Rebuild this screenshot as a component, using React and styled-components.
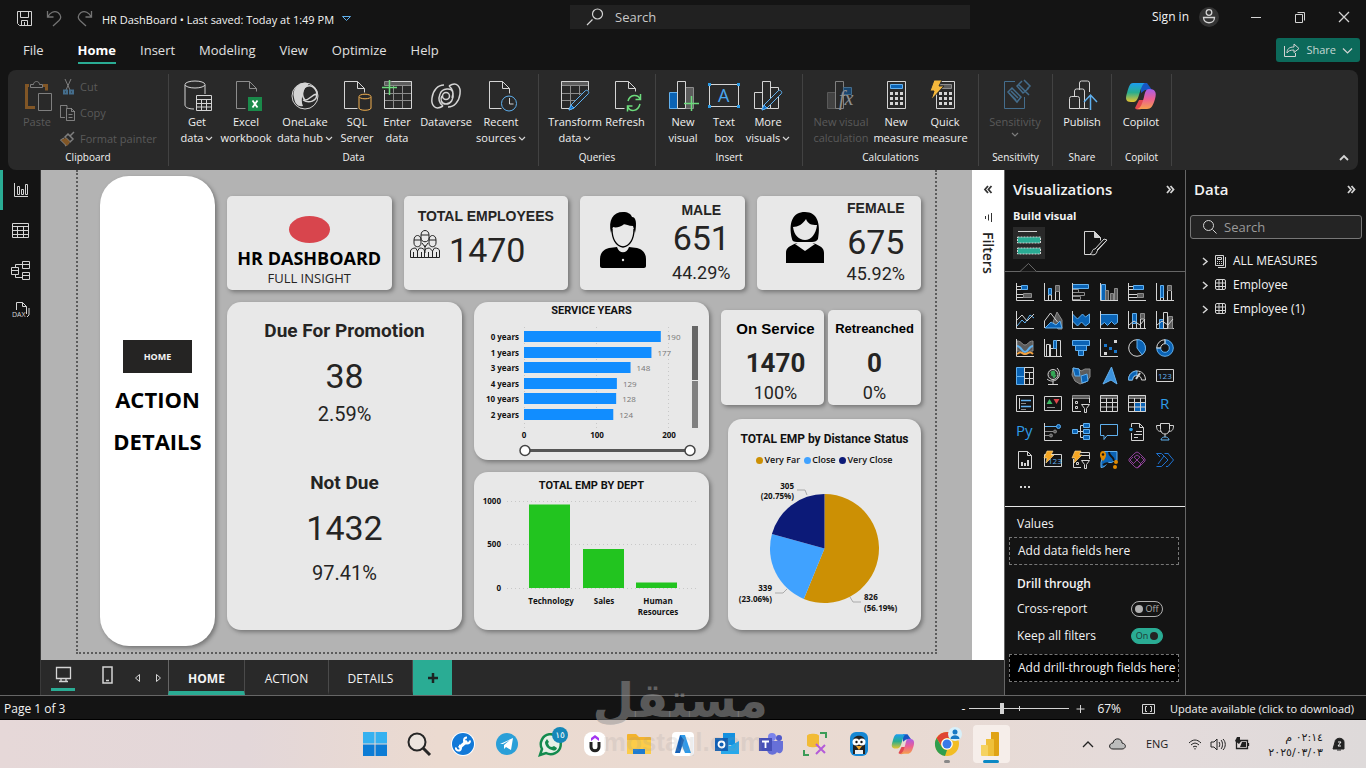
import React, { useState } from "react";
import styled, { createGlobalStyle } from "styled-components";

const GlobalStyle = createGlobalStyle`
  * {
    box-sizing: border-box;
  }
  body {
    margin: 0;
    background: #141414;
    color: #f3f3f3;
    font-family: "Open Sans", "Noto Sans", sans-serif;
    font-size: 12px;
    line-height: 16px;
  }
  button, input {
    font: inherit;
    color: inherit;
    background: none;
    border: none;
    padding: 0;
    margin: 0;
  }
`;

const Window = styled.div`
  display: flex;
  flex-direction: column;
  min-height: 100vh;
  position: relative;
`;

/* every drawing shares these stroke classes */
const Svg = styled.svg`
  display: block;
  flex: none;
  fill: none;
  stroke: #d4d4d4;
  overflow: visible;
  opacity: ${(p) => (p.$dim ? 0.5 : 1)};

  .b {
    fill: #0a63b5;
    stroke: #62b0ee;
  }
  .g {
    fill: #5c5c5c;
    stroke: #8c8c8c;
  }
  .l {
    stroke: #5fb0ee;
  }
  .q {
    stroke: #8c8c8c;
  }
  .f {
    fill: #d4d4d4;
    stroke: none;
  }
  text {
    stroke: none;
  }
`;

function Icon({ w = 16, h, dim, children }) {
  const height = h || w;
  return (
    <Svg width={w} height={height} viewBox={`0 0 ${w} ${height}`} $dim={dim} aria-hidden="true">
      {children}
    </Svg>
  );
}

function Chevron({ dim }) {
  return (
    <Icon w={8} dim={dim}>
      <path d="M1 3l3 3 3-3" strokeWidth="1.2" />
    </Icon>
  );
}

/* ---------- title bar ---------- */

const TitleBar = styled.header`
  display: flex;
  align-items: center;
  height: 34px;
`;
const TitleLeft = styled.div`
  display: flex;
  align-items: center;
  flex: 0 1 570px;
  padding: 2px 0 0 16px;
  gap: 13px;
`;
const FileName = styled.button`
  display: flex;
  align-items: center;
  gap: 8px;
  white-space: nowrap;
  margin-left: -4px;
  padding-top: 4px;
  font-size: 11px;
`;
const TitleSearch = styled.label`
  display: flex;
  align-items: center;
  gap: 11px;
  flex: 0 1 400px;
  height: 24px;
  padding: 0 16px;
  background: #212121;
  font-size: 13px;

  input {
    flex: 1;
    min-width: 0;
    outline: none;
  }
  input::placeholder {
    color: #c8c8c8;
    opacity: 1;
  }
`;
const TitleRight = styled.div`
  display: flex;
  align-items: center;
  margin-left: auto;
`;
const SignIn = styled.button`
  display: flex;
  align-items: center;
  gap: 10px;
  margin-right: 15px;
`;
const WindowButton = styled.button`
  display: flex;
  align-items: center;
  justify-content: center;
  width: 44px;
  height: 36px;
`;

function Title() {
  return (
    <TitleBar>
      <TitleLeft>
        <Icon w={17}>
          <path d="M1.500 1.500h14v14h-12l-2-2zM4.500 1.500v6h8v-6M5.500 15.500v-5h6v5M8.500 12v3" />
        </Icon>
        <Icon w={17} dim>
          <path d="M1.500 1v6h6M2 6.500C4 3 8 0 12 2.500c4 3 3 6 1 8L7 16" strokeWidth="1.3" />
        </Icon>
        <Icon w={17} dim>
          <path d="M15.500 1v6h-6M15 6.500C13 3 9 0 5 2.500c-4 3-3 6-1 8L10 16" strokeWidth="1.3" />
        </Icon>
        <FileName>
          <span>HR DashBoard • Last saved: Today at 1:49 PM</span>
          <Icon w={9} h={12}>
            <path d="M.5 2.500h8l-4 4z" className="l" />
          </Icon>
        </FileName>
      </TitleLeft>
      <TitleSearch>
        <Icon w={18}>
          <path d="M6.500 11.500L1 17M6.500 6a5 5 0 1 0 10 0a5 5 0 1 0-10 0" strokeWidth="1.2" />
        </Icon>
        <input placeholder="Search" aria-label="Search" />
      </TitleSearch>
      <TitleRight>
        <SignIn>
          Sign in
          <Icon w={20}>
            <circle cx="10" cy="10" r="10" fill="#333" stroke="none" />
            <circle cx="10" cy="5.500" r="2.800" strokeWidth="1.300" />
            <path d="M4.500 10.500h11c0 7-11 7-11 0z" strokeWidth="1.300" />
          </Icon>
        </SignIn>
        <WindowButton aria-label="Minimize">
          <Icon w={12}>
            <path d="M1 6.500h10" />
          </Icon>
        </WindowButton>
        <WindowButton aria-label="Restore">
          <Icon w={12}>
            <path d="M1.500 3.500h7v8h-7zM3.500 1.500h7v8" />
          </Icon>
        </WindowButton>
        <WindowButton aria-label="Close">
          <Icon w={12}>
            <path d="M1 1l10 10M11 1L1 11" strokeWidth="1.300" />
          </Icon>
        </WindowButton>
      </TitleRight>
    </TitleBar>
  );
}

/* ---------- menu ---------- */

const MenuBar = styled.nav`
  display: flex;
  align-items: center;
  height: 36px;
  gap: 24px;
  padding: 0 6px 4px 23px;
  font-size: 13px;
`;
const MenuItem = styled.button`
  height: 28px;
  padding-top: 2px;
  color: ${(p) => (p.$active ? "#fff" : "#e0e0e0")};
  font-weight: ${(p) => (p.$active ? 700 : 400)};
  border-bottom: 2px solid ${(p) => (p.$active ? "#2aac94" : "transparent")};

  &:first-child {
    margin-right: 10px;
  }
`;
const ShareButton = styled.button`
  display: flex;
  align-items: center;
  gap: 6px;
  height: 24px;
  padding: 0 7px;
  margin-left: auto;
  border-radius: 3px;
  background: #0c695a;
  color: #c4d8d4;
  font-size: 11px;
`;

const menu = ["File", "Home", "Insert", "Modeling", "View", "Optimize", "Help"];

function Menu() {
  return (
    <MenuBar>
      {menu.map((name) => (
        <MenuItem key={name} $active={name === "Home"}>
          {name}
        </MenuItem>
      ))}
      <ShareButton>
        <Icon w={17}>
          <path d="M1.500 4v10.500h11V11M4 11c0-4 2-6 7-6V2l5 4.500-5 4V8c-4 0-6 1-7 3z" />
        </Icon>
        Share
        <Icon w={11}>
          <path d="M1 3.500l4.500 4.500L10 3.500" strokeWidth="1.200" />
        </Icon>
      </ShareButton>
    </MenuBar>
  );
}

/* ---------- ribbon ---------- */

const RibbonBar = styled.section`
  display: flex;
  height: 100px;
  margin: 0 8px;
  background: #292929;
  border-radius: 8px;
  font-size: 11px;
`;
const Group = styled.div`
  display: flex;
  flex-direction: column;
  justify-content: space-between;
  width: ${(p) => p.$w}px;
  margin: 4px 0;
  border-right: 1px solid #424242;
`;
const GroupTools = styled.div`
  display: flex;
  padding-left: ${(p) => p.$pad}px;
`;
const GroupName = styled.div`
  text-align: center;
  font-size: 10px;
  line-height: 14px;
  margin-bottom: 2px;
`;
const Tool = styled.button`
  display: flex;
  flex-direction: column;
  align-items: center;
  width: ${(p) => p.$w}px;
  padding-top: 6px;
  gap: 2px;
  white-space: nowrap;
  color: ${(p) => (p.disabled ? "#5a5a5a" : "#f0f0f0")};
`;
const ToolLine = styled.span`
  display: flex;
  align-items: center;
  justify-content: center;
  gap: 2px;
`;
const ClipList = styled.div`
  display: flex;
  flex-direction: column;
  gap: 3px;
  padding-top: 1px;
`;
const ClipButton = styled.button`
  display: flex;
  align-items: center;
  gap: 4px;
  height: 23px;
  color: #5a5a5a;
`;
const Collapse = styled.button`
  align-self: flex-end;
  margin: 0 8px 6px auto;
`;

const sheet = <path d="M6.500 1.500h13l7 7M6.500 1.500v27h9M19.500 1.500v7h7v3" />;
const pencil = (
  <g className="l">
    <path d="M26 11c1-1 2-1 3 0s1 2 0 3L15 28l-5 2 2-5z" fill="#292929" />
    <path d="M10 30l2-5 3 3z" fill="#0a6cc8" />
  </g>
);

const art = {
  paste: (
    <>
      <path d="M8 5.500H5.500v22H14M22 5.500h3.500v5" stroke="#d98324" strokeWidth="3" />
      <path d="M9.500 7.500h12v-3h-3c0-4-6-4-6 0h-3zM17.500 13.500h13v17h-13z" fill="#292929" />
    </>
  ),
  get: (
    <>
      <ellipse cx="14" cy="4.500" rx="10" ry="3.500" />
      <path d="M4 5v20c0 2 3 4 9 4M24 5v9M15.500 15.500h15v15h-15zM15.500 19.500h15M15.500 23.500h15M15.500 27h15M20.500 19v11M25.500 19v11" />
    </>
  ),
  excel: (
    <>
      <g className="q">{sheet}</g>
      <path d="M18 17h14v14H18z" fill="#1a8a4a" stroke="none" />
      <path d="M22.500 20.500l5 7M27.500 20.500l-5 7" stroke="#fff" strokeWidth="1.800" />
    </>
  ),
  lake: (
    <>
      <circle cx="16" cy="16" r="13" />
      <path d="M5 18C2 8 12 0 20 3.500 14 8 11 20 14 26 9 27 6 24 5 18z" className="f" />
      <path d="M19 4c-6 4-7 12-3 16 5 0 7-6 12-6M15 8c6-5 12-1 13 6 0 7-8 10-14 6" strokeWidth="1.500" />
    </>
  ),
  sql: (
    <>
      <path d="M3.500 1.500h13l7 7M3.500 1.500v27h13M16.500 1.500v7h7v4" />
      <g stroke="#f2b050" fill="#292929">
        <path d="M18 17v11c0 3 12 3 12 0V17" />
        <ellipse cx="24" cy="16.500" rx="6" ry="2.300" />
      </g>
    </>
  ),
  enter: (
    <>
      <path d="M3.500 1.500h27v4h-27z" className="g" />
      <path d="M3.500 13.500h27M3.500 20.500h27M12.500 6v22M21.500 6v22" className="q" />
      <path d="M3.500 10v18.500h27v-27h-20" />
      <path d="M8.500 0v15M1 7.500h15" stroke="#6cdb7c" strokeWidth="1.500" />
    </>
  ),
  dataverse: (
    <g strokeWidth="1.500">
      <path d="M13 26C5 31 1 25 2 18 3 10 8 5 14 5M19 6c8-5 12 1 11 8-1 8-6 13-12 13" />
      <path d="M13 26c-4-3-5-7-3-12 2-6 12-7 13-1s-2 11-7 11c-5 0-6-5-4-8M19 6c4 3 5 7 3 12" />
      <circle cx="16" cy="16" r="3.500" />
    </g>
  ),
  recent: (
    <>
      <path d="M4.500 1.500h13l7 7M4.500 1.500v27h12M17.500 1.500v7h7v5" />
      <circle cx="24" cy="23.500" r="7.500" className="l" fill="#292929" />
      <path d="M24.500 18v6h4" />
    </>
  ),
  transform: (
    <>
      <path d="M2.500 1.500h27v4h-27z" className="g" />
      <path d="M2.500 13.500h20M2.500 20.500H16M11.500 6v22M20.500 6v9" className="q" />
      <path d="M12 28.500H2.500v-27h27v9" />
      {pencil}
    </>
  ),
  refresh: (
    <>
      {sheet}
      <path d="M19 21c2-7 10-7 12-2M31.500 14v5.500h-5M31 24c-2 8-10 8-12 3M18.500 31.500V26h5" stroke="#6cdb7c" strokeWidth="1.500" />
    </>
  ),
  visual: (
    <>
      <path d="M18.500 7.500h8v21h-8z" className="g" />
      <path d="M2.500 12.500h8v16h-8z" className="b" />
      <path d="M10.500 1.500h8v27h-8z" fill="#292929" />
      <path d="M24.500 16v15M17 23.500h15" stroke="#6cdb7c" strokeWidth="1.500" />
    </>
  ),
  textbox: (
    <>
      <path d="M1.500 4.500h29v22h-29z" />
      <path d="M0 3h3v3H0zM29 3h3v3h-3zM0 25h3v3H0zM29 25h3v3h-3z" fill="#2b9be6" stroke="none" />
      <text x="10" y="22" fontSize="18" fill="#4aa8ee">A</text>
    </>
  ),
  more: (
    <>
      <path d="M2.500 12.500h8v16h-8zM10.500 1.500h8v27h-8zM18.500 7.500h8v21h-8z" />
      {pencil}
    </>
  ),
  calc: (
    <>
      <path d="M2.500 12.500h8v16h-8z" className="g" />
      <path d="M10.500 1.500h8v27h-8z" />
      <path d="M18.500 7.500h8v7h-8z" className="b" />
      <text x="14" y="25" fontSize="20" fontStyle="italic" fontFamily="Liberation Serif, serif" fill="#f4f4f4">fx</text>
    </>
  ),
  measure: (
    <>
      <path d="M7.500 1.500h18v27h-18z" />
      <path d="M10.500 4.500h12v4h-12z" className="b" />
      <path d="M10 12h3v3h-3zM15 12h3v3h-3zM20 12h3v3h-3zM10 17h3v3h-3zM15 17h3v3h-3zM20 17h3v3h-3zM10 22h3v3h-3zM15 22h3v3h-3zM20 22h3v3h-3z" className="f" />
    </>
  ),
  quick: (
    <>
      <path d="M7.500 1.500h18v27h-18z" />
      <path d="M10.500 4.500h12v4h-12z" className="g" />
      <path d="M10 12h3v3h-3zM15 12h3v3h-3zM20 12h3v3h-3zM10 17h3v3h-3zM15 17h3v3h-3zM20 17h3v3h-3zM10 22h3v3h-3zM15 22h3v3h-3zM20 22h3v3h-3z" className="f" />
      <path d="M5 0h8l-3 6h5L2 20l3-9H1z" fill="#f5b83c" stroke="#292929" />
    </>
  ),
  sensitivity: (
    <g className="l">
      <path d="M16 1.500H5.500v27h20V17" />
      <path d="M9 12l4-4 9 9-4 5zM12 11l7 7M10 13l7 7M19 4l5 5 6 6M23 1l-5 5 6 7 6-5M25 0l6 6-3 3" strokeWidth="1.500" />
    </g>
  ),
  publish: (
    <>
      <path d="M13.500 10v-7q0-2 2-2h6q2 0 2 2v9M8.500 16v-5q0-2 2-2h6q2 0 2 2v18M3.500 18.500q0-2 2-2h6q2 0 2 2v10h-10zM13.500 28.500h9" />
      <path d="M24.500 30V16M18 22l6.500-7 6.500 7" className="l" strokeWidth="1.500" />
    </>
  ),
};

function CopilotMark({ size }) {
  return (
    <Svg width={size} height={size} viewBox="0 0 32 32" aria-hidden="true">
      <defs>
        <linearGradient id="copA" x1="0" y1="0" x2="0" y2="1">
          <stop offset="0" stopColor="#1b9df0" />
          <stop offset=".5" stopColor="#29ad8e" />
          <stop offset="1" stopColor="#e8c42e" />
        </linearGradient>
        <linearGradient id="copB" x1="0" y1="0" x2="0" y2="1">
          <stop offset="0" stopColor="#a85de8" />
          <stop offset=".5" stopColor="#ec5f92" />
          <stop offset="1" stopColor="#f5a04c" />
        </linearGradient>
      </defs>
      <g stroke="none">
        <path d="M16 3h6l5 7h-7l-4 3z" fill="#1656c4" />
        <path d="M10 28l4-8h7l-4 8c-1 2-6 2-7 0z" fill="#e2484f" />
        <path d="M8 3h12c-3 1-4 6-6 12-2 7-4 7-8 7-5 0-6-3-4-9C4 6 5 3 8 3z" fill="url(#copA)" />
        <path d="M24 9c6 0 8 3 6 10-2 7-4 10-8 10H12c4-1 5-5 7-12 1-5 2-8 5-8z" fill="url(#copB)" />
      </g>
    </Svg>
  );
}

const groups = [
  {
    name: "Data",
    w: 370,
    pad: 4,
    tools: [
      [48, "get", "Get", "data", true],
      [50, "excel", "Excel", "workbook"],
      [68, "lake", "OneLake", "data hub", true],
      [36, "sql", "SQL", "Server"],
      [44, "enter", "Enter", "data"],
      [54, "dataverse", "Dataverse"],
      [56, "recent", "Recent", "sources", true],
    ],
  },
  { name: "Queries", w: 117, pad: 8, tools: [[56, "transform", "Transform", "data", true], [44, "refresh", "Refresh"]] },
  {
    name: "Insert",
    w: 147,
    pad: 6,
    tools: [
      [42, "visual", "New", "visual"],
      [40, "textbox", "Text", "box"],
      [48, "more", "More", "visuals", true],
    ],
  },
  {
    name: "Calculations",
    w: 176,
    pad: 8,
    tools: [
      [60, "calc", "New visual", "calculation", false, true],
      [50, "measure", "New", "measure"],
      [48, "quick", "Quick", "measure"],
    ],
  },
  { name: "Sensitivity", w: 74, pad: 6, tools: [[60, "sensitivity", "Sensitivity", "", true, true]] },
  { name: "Share", w: 59, pad: 4, tools: [[50, "publish", "Publish"]] },
  { name: "Copilot", w: 60, pad: 4, tools: [[50, "copilot", "Copilot"]] },
];

function Ribbon() {
  return (
    <RibbonBar>
      <Group $w={161}>
        <GroupTools $pad={6}>
          <Tool $w={46} disabled>
            <Icon w={32} dim>{art.paste}</Icon>
            Paste
          </Tool>
          <ClipList>
            <ClipButton disabled>
              <Icon dim>
                <path d="M5 0l5 11M11 0L6 11" />
                <path d="M4 11.500h3v3H4zM10 11.500h3v3h-3z" className="l" strokeWidth="2" />
              </Icon>
              Cut
            </ClipButton>
            <ClipButton disabled>
              <Icon dim>
                <path d="M5 12.500H.5v-12H7V3M6.500 3.500h5l3 3v9h-8zM11.500 3.500v3h3M8.500 9.500h4M8.500 12.500h4" />
              </Icon>
              Copy
            </ClipButton>
            <ClipButton disabled>
              <Icon dim>
                <path d="M14 1l-4 4M8 3l5 5-3 3-5-5zM4 7L1 9l5 5M5 15l4-3" strokeWidth="1.500" />
                <path d="M1 9l5-2 4 4-3 4z" fill="#d98324" stroke="none" />
              </Icon>
              Format painter
            </ClipButton>
          </ClipList>
        </GroupTools>
        <GroupName>Clipboard</GroupName>
      </Group>
      {groups.map((group) => (
        <Group key={group.name} $w={group.w}>
          <GroupTools $pad={group.pad}>
            {group.tools.map(([w, icon, first, second, drop, off]) => (
              <Tool key={icon} $w={w} disabled={off}>
                {icon === "copilot" ? <CopilotMark size={32} /> : <Icon w={32} dim={off}>{art[icon]}</Icon>}
                <span>
                  <ToolLine>{first}</ToolLine>
                  <ToolLine>
                    {second}
                    {drop && <Chevron dim={off} />}
                  </ToolLine>
                </span>
              </Tool>
            ))}
          </GroupTools>
          <GroupName>{group.name}</GroupName>
        </Group>
      ))}
      <Collapse aria-label="Collapse the ribbon">
        <Icon w={12}>
          <path d="M2 8l4-4 4 4" strokeWidth="1.800" />
        </Icon>
      </Collapse>
    </RibbonBar>
  );
}

/* ---------- workspace ---------- */

const Workspace = styled.main`
  display: flex;
  flex: 1;
  border-bottom: 1px solid #666;
`;
const Rail = styled.nav`
  display: flex;
  flex-direction: column;
  width: 41px;
  border-right: 1px solid #3a3a3a;
`;
const RailButton = styled.button`
  display: flex;
  align-items: center;
  justify-content: center;
  height: 40px;
  padding-right: 2px;
  border-left: 3px solid ${(p) => (p.$active ? "#2aac94" : "transparent")};
`;
const Center = styled.div`
  display: flex;
  flex-direction: column;
  flex: 1;
  min-width: 0;
`;
const CanvasRow = styled.div`
  display: flex;
  flex: 1;
`;
const Canvas = styled.div`
  display: flex;
  flex: 1;
  padding: 0 35px 6px;
  background: #b3b3b3;
`;
const Page = styled.div`
  display: flex;
  flex: 1;
  gap: 12px;
  padding: 6px 14px 6px 22px;
  border: 2px dotted #5c5c5c;
  border-top: none;
`;
const SideNav = styled.nav`
  display: flex;
  flex-direction: column;
  align-items: center;
  justify-content: center;
  gap: 10px;
  width: 115px;
  padding-bottom: 25px;
  background: #fff;
  border-radius: 29px;
  box-shadow: 2px 2px 4px rgba(0, 0, 0, 0.35);
`;
const HomeButton = styled.button`
  width: 69px;
  height: 33px;
  background: #252423;
  font-size: 9px;
  font-weight: 700;
`;
const SideLink = styled.a`
  color: #000;
  font-size: 22px;
  font-weight: 700;
  line-height: 32px;
  text-decoration: none;
`;
const Report = styled.div`
  display: flex;
  flex-direction: column;
  flex: 1;
  gap: 12px;
  padding: 20px 0 16px;
  color: #252423;
  font-family: Roboto, sans-serif;
`;
const KpiRow = styled.div`
  display: grid;
  grid-template-columns: repeat(4, 1fr);
  gap: 12px;
  height: 94px;
`;
const DetailRow = styled.div`
  display: grid;
  grid-template-columns: 235fr 235fr 200fr;
  gap: 12px;
  flex: 1;
`;
const Stack = styled.div`
  display: flex;
  flex-direction: column;
  gap: ${(p) => p.$gap}px;
  padding-top: ${(p) => p.$top || 0}px;
`;
const Card = styled.section`
  display: flex;
  flex-direction: ${(p) => (p.$row ? "row" : "column")};
  align-items: center;
  flex: 1;
  min-width: 0;
  padding-top: ${(p) => p.$top || 0}px;
  background: #e8e8e8;
  border-radius: ${(p) => (p.$round ? 14 : 5)}px;
  box-shadow: 2px 2px 4px rgba(0, 0, 0, 0.35);
`;
const PieCard = styled(Card)`
  margin-left: 7px;
`;
const Logo = styled.div`
  width: 41px;
  height: 27px;
  margin-top: 20px;
  border-radius: 50%;
  background: #d8454d;
`;
const Brand = styled.h1`
  margin: 4px 0 0;
  color: #000;
  font-family: "Open Sans", sans-serif;
  font-size: 18px;
  line-height: 22px;
  white-space: nowrap;
`;
const Tagline = styled.div`
  font-family: "Open Sans", sans-serif;
  font-size: 13px;
  line-height: 18px;
`;
const Caption = styled.h2`
  margin: 0;
  font-family: "Liberation Sans", sans-serif;
  font-size: ${(p) => p.$size || 14}px;
  line-height: 20px;
  white-space: nowrap;
`;
const Heading = styled.h2`
  margin: 0 0 9px;
  font-size: 19px;
  line-height: 28px;
`;
const Big = styled.div`
  font-size: ${(p) => (p.$bold ? 26 : 34)}px;
  font-weight: ${(p) => (p.$bold ? 700 : 400)};
  line-height: 36px;
`;
const Percent = styled.div`
  font-size: ${(p) => (p.$large ? 20 : 18)}px;
  line-height: ${(p) => (p.$large ? 32 : 28)}px;
`;
const Due = styled.div`
  padding-top: 15px;
  margin-bottom: 24px;
  text-align: center;

  ${Big} {
    margin-bottom: ${(p) => p.$below || 0}px;
    line-height: 44px;
  }
`;
const Figures = styled.div`
  display: flex;
  flex-direction: column;
  align-items: center;
  margin-left: auto;
  padding-right: ${(p) => p.$right}px;

  ${Big} {
    margin: ${(p) => p.$above || 0}px 0 ${(p) => p.$below || 0}px;
  }
`;
const TotalLine = styled.div`
  display: flex;
  align-items: center;
  gap: 9px;
  height: 48px;
  margin-right: 36px;

  svg {
    margin-bottom: 12px;
  }
`;
const ChartTitle = styled.h2`
  margin: ${(p) => p.$top}px 0 0;
  color: #111;
  font-size: ${(p) => (p.$wide ? 12 : 11)}px;
  line-height: 16px;
  white-space: nowrap;
`;
const ChartSvg = styled.svg`
  display: block;
  flex: none;
  font-family: "Open Sans", sans-serif;
  font-size: 8px;
  font-weight: 700;
  fill: #111;
`;
const Legend = styled.div`
  display: flex;
  gap: 4px;
  margin-top: 5px;
  color: #111;
  font-family: "Open Sans", sans-serif;
  font-size: 9px;
  font-weight: 600;
  white-space: nowrap;
`;
const LegendItem = styled.span`
  display: flex;
  align-items: center;
  gap: 1px;

  &::before {
    content: "";
    width: 7px;
    height: 7px;
    border-radius: 50%;
    background: ${(p) => p.$color};
  }
`;

const service = [
  ["0 years", 190],
  ["1 years", 177],
  ["3 years", 148],
  ["4 years", 129],
  ["10 years", 128],
  ["2 years", 124],
];

function ServiceChart() {
  return (
    <ChartSvg width="235" height="140" viewBox="0 0 235 140">
      <path d="M50.500 8v103M122.500 8v103M194.500 8v103" stroke="#c8c8c8" strokeDasharray="1 3" />
      {service.map(([label, value], i) => (
        <g key={label}>
          <text x="45" y={21 + Math.round(i * 15.6)} textAnchor="end">{label}</text>
          <rect x="50" y={12 + Math.round(i * 15.6)} width={value * 0.72} height="11" fill="#118dff" />
          <text x={56 + value * 0.72} y={21 + Math.round(i * 15.6)} fill="#777" fontWeight="400">{value}</text>
        </g>
      ))}
      <text x="50" y="119" textAnchor="middle">0</text>
      <text x="123" y="119" textAnchor="middle">100</text>
      <text x="195" y="119" textAnchor="middle">200</text>
      <path d="M218 7h6v54h-6z" fill="#666" />
      <path d="M218 62h6v47h-6z" fill="#808080" />
      <path d="M50 131.500h166" stroke="#555" strokeWidth="3" />
      <circle cx="51" cy="131.500" r="5" fill="#fff" stroke="#444" strokeWidth="1.500" />
      <circle cx="216" cy="131.500" r="5" fill="#fff" stroke="#444" strokeWidth="1.500" />
    </ChartSvg>
  );
}

function DeptChart() {
  return (
    <ChartSvg width="235" height="130" viewBox="0 0 235 130">
      <path d="M33 7.500h192M33 50.500h192M33 94.500h192" stroke="#c8c8c8" strokeDasharray="1 3" />
      <text x="27" y="10" textAnchor="end">1000</text>
      <text x="27" y="53" textAnchor="end">500</text>
      <text x="27" y="97" textAnchor="end">0</text>
      <path d="M55 10.500h41V94H55zM109 55h41v39h-41zM162 88.500h41V94h-41z" fill="#22c41f" />
      <text x="77" y="110" textAnchor="middle">Technology</text>
      <text x="130" y="110" textAnchor="middle">Sales</text>
      <text x="184" y="110" textAnchor="middle">Human</text>
      <text x="184" y="121" textAnchor="middle">Resources</text>
    </ChartSvg>
  );
}

const slices = [
  [826, "#cc9004"],
  [339, "#40a2ff"],
  [305, "#0c1a78"],
];

function slicePath(from, to) {
  const at = (t) => {
    const a = t * 2 * Math.PI;
    return `${96.5 + 54.5 * Math.sin(a)} ${80.5 - 54.5 * Math.cos(a)}`;
  };
  return `M96.5 80.5L${at(from)}A54.5 54.5 0 ${to - from > 0.5 ? 1 : 0} 1 ${at(to)}Z`;
}

function PieChart() {
  let sum = 0;
  return (
    <ChartSvg width="193" height="150" viewBox="0 0 193 150">
      {slices.map(([value, color]) => {
        const from = sum / 1470;
        sum += value;
        return <path key={value} d={slicePath(from, sum / 1470)} fill={color} />;
      })}
      <path d="M69 22h8l2 5M47 125h8l4-4M122 129l3 5h8" fill="none" stroke="#aaa" />
      <text x="66" y="21" textAnchor="end">305</text>
      <text x="66" y="31" textAnchor="end">(20.75%)</text>
      <text x="44" y="123" textAnchor="end">339</text>
      <text x="44" y="134" textAnchor="end">(23.06%)</text>
      <text x="136" y="132">826</text>
      <text x="136" y="143">(56.19%)</text>
    </ChartSvg>
  );
}

const Person = styled.svg`
  display: block;
  flex: none;
  margin: 0 0 ${(p) => p.$bottom}px ${(p) => p.$left}px;
`;

function Man() {
  return (
    <Person width="46" height="56" viewBox="0 0 46 56" $left={20} $bottom={6} aria-label="Male">
      <path d="M0 54V47c0-6 4-10 9-11l8-1c2 7 10 7 12 0l8 1c5 1 9 5 9 11v7c0 1-1 2-2 2H2c-1 0-2-1-2-2z" />
      <path d="M12 17c0 10 4 17 11 18 7-1 11-8 11-18" fill="#e8e8e8" stroke="#000" strokeWidth="1.300" />
      <path d="M11 21C8 8 13 0 23 0c5 0 8 2 9 5 4 0 5 6 3 16l-2-7c-6 0-9-3-10-1-3 2-7 3-10 2z" />
      <circle cx="23" cy="48" r="1.200" fill="#e8e8e8" />
    </Person>
  );
}

function Woman() {
  return (
    <Person width="38" height="51" viewBox="0 0 38 51" $left={29} $bottom={12} aria-label="Female">
      <path d="M0 51V41c0-5 3-7 11-10 4 6 12 6 16 0 8 3 11 5 11 10v10z" />
      <path d="M6 27C2 10 7 0 19 0s16 11 13 27c-1 2-3 3-6 3H11c-3 0-5-1-5-3z" />
      <path d="M7 15c5 0 10-3 13-8 2 5 5 6 11 6-1 9-6 15-12 15S8 23 7 15z" fill="#e8e8e8" />
      <path d="M9 32l10 7 10-7-3-1H12z" fill="#e8e8e8" />
    </Person>
  );
}

function Team() {
  return (
    <svg width="30" height="28" viewBox="0 0 30 28" fill="none" stroke="#222" aria-label="Employees">
      <path d="M11 5c0-6 8-6 8 0v3c0 5-8 5-8 0zM11 5h8M4 10c0-6 7-6 7 0v3c0 5-7 5-7 0zM4 10h7M19 10c0-6 7-6 7 0v3c0 5-7 5-7 0zM19 10h7" />
      <path d="M.5 27.500V21c0-2 3-3 5-3l2 3 2-3c3 0 5 1 5 3v6.500zM14.500 27.500V21c0-2 3-3 5-3l3 3 2-3c3 0 5 1 5 3v6.500zM3.500 22v5M11.500 22v5M18.500 22v5M26.500 22v5M7.500 21v6M22.500 21v6M12 13l3 4 3-4M15 15v8" />
    </svg>
  );
}

const SmallCards = styled.div`
  display: grid;
  grid-template-columns: 103fr 93fr;
  gap: 4px;
  height: 95px;

  ${Card} {
    padding-top: 9px;
  }
  ${Card}:first-child {
    padding-left: 6px;
  }
  ${Caption} {
    color: #000;
  }
  ${Big} {
    margin-top: 6px;
  }
  ${Percent} {
    line-height: 24px;
  }
`;

function ReportPage() {
  return (
    <Page>
      <SideNav>
        <HomeButton>HOME</HomeButton>
        <SideLink href="#action">ACTION</SideLink>
        <SideLink href="#details">DETAILS</SideLink>
      </SideNav>
      <Report>
        <KpiRow>
          <Card>
            <Logo />
            <Brand>HR DASHBOARD</Brand>
            <Tagline>FULL INSIGHT</Tagline>
          </Card>
          <Card $top={10}>
            <Caption>TOTAL EMPLOYEES</Caption>
            <TotalLine>
              <Team />
              <Big>1470</Big>
            </TotalLine>
          </Card>
          <Card $row>
            <Man />
            <Figures $right={14} $below={3}>
              <Caption>MALE</Caption>
              <Big>651</Big>
              <Percent>44.29%</Percent>
            </Figures>
          </Card>
          <Card $row>
            <Woman />
            <Figures $right={16} $above={6}>
              <Caption>FEMALE</Caption>
              <Big>675</Big>
              <Percent>45.92%</Percent>
            </Figures>
          </Card>
        </KpiRow>
        <DetailRow>
          <Card $round>
            <Due>
              <Heading>Due For Promotion</Heading>
              <Big>38</Big>
              <Percent $large>2.59%</Percent>
            </Due>
            <Due $below={7}>
              <Heading>Not Due</Heading>
              <Big>1432</Big>
              <Percent $large>97.41%</Percent>
            </Due>
          </Card>
          <Stack $gap={12}>
            <Card $round>
              <ChartTitle $top={1}>SERVICE YEARS</ChartTitle>
              <ServiceChart />
            </Card>
            <Card $round>
              <ChartTitle $top={6}>TOTAL EMP BY DEPT</ChartTitle>
              <DeptChart />
            </Card>
          </Stack>
          <Stack $gap={14} $top={8}>
            <SmallCards>
              <Card>
                <Caption $size={15}>On Service</Caption>
                <Big $bold>1470</Big>
                <Percent>100%</Percent>
              </Card>
              <Card>
                <Caption $size={13}>Retreanched</Caption>
                <Big $bold>0</Big>
                <Percent>0%</Percent>
              </Card>
            </SmallCards>
            <PieCard $round>
              <ChartTitle $top={12} $wide>TOTAL EMP by Distance Status</ChartTitle>
              <Legend>
                <LegendItem $color="#cc9004">Very Far</LegendItem>
                <LegendItem $color="#40a2ff">Close</LegendItem>
                <LegendItem $color="#0c1a78">Very Close</LegendItem>
              </Legend>
              <PieChart />
            </PieCard>
          </Stack>
        </DetailRow>
      </Report>
    </Page>
  );
}

/* ---------- filters and page tabs ---------- */

const FilterStrip = styled.aside`
  display: flex;
  flex-direction: column;
  align-items: center;
  gap: 18px;
  width: 32px;
  padding-top: 15px;
  background: #fff;
  color: #252423;

  svg {
    stroke: #333;
  }
`;
const FilterLabel = styled.span`
  writing-mode: vertical-rl;
  font-size: 14px;
  font-weight: 600;
  line-height: 20px;
`;
const FilterMark = styled.span`
  display: flex;
  flex-direction: column;
  align-items: center;
  gap: 10px;
`;
const PageTabs = styled.div`
  display: flex;
  height: 35px;
  background: #292929;
`;
const Device = styled.button`
  display: flex;
  justify-content: center;
  width: 24px;
  height: 31px;
  margin-left: 10px;
  padding-top: 6px;
  border-bottom: 3px solid ${(p) => (p.$active ? "#2aac94" : "transparent")};
`;
const PageArrow = styled.button`
  width: 21px;
  padding-left: 8px;
`;
const Phone = styled(Device)`
  margin: 0 7px 0 20px;
`;
const Tab = styled.button`
  width: ${(p) => (p.$active ? 77 : 84)}px;
  padding-top: 6px;
  border: 1px solid #4a4a4a;
  border-width: 0 1px 0 0;
  border-bottom: 4px solid ${(p) => (p.$active ? "#2aac94" : "transparent")};
  border-left: ${(p) => (p.$active ? "1px solid #666" : "none")};
  font-weight: ${(p) => (p.$active ? 700 : 400)};
`;
const AddTab = styled.button`
  display: flex;
  align-items: center;
  justify-content: center;
  width: 39px;
  background: #2aac94;
`;

/* ---------- right panes ---------- */

const Pane = styled.aside`
  display: flex;
  flex-direction: column;
  width: 181px;
  border-left: 1px solid #666;
`;
const PaneHead = styled.div`
  display: flex;
  align-items: center;
  justify-content: space-between;
  height: 38px;
  padding: 0 10px 0 8px;
`;
const PaneTitle = styled.h2`
  margin: 0;
  font-size: 15px;
  font-weight: 600;
`;
const BuildLabel = styled.h3`
  margin: 0;
  padding-left: 8px;
  font-size: 11px;
  font-weight: 700;
`;
const ModeRow = styled.div`
  display: flex;
  gap: 34px;
  height: 48px;
  padding: 3px 8px 0;
  border-bottom: 1px solid #666;
  position: relative;
`;
const ModeButton = styled.button`
  display: flex;
  align-items: center;
  justify-content: center;
  width: 32px;
  height: 32px;
  background: ${(p) => (p.$active ? "#292929" : "transparent")};
`;
const Notch = styled.svg`
  position: absolute;
  left: 15px;
  bottom: -1px;
`;
const VisualGrid = styled.div`
  display: grid;
  grid-template-columns: repeat(6, 28px);
  grid-auto-rows: 28px;
  padding: 6px 6px 0;
  height: 235px;
  border-bottom: 1px solid #e8e8e8;
`;
const VisualButton = styled.button`
  display: flex;
  align-items: center;
  justify-content: center;
`;
const Wells = styled.div`
  display: flex;
  flex-direction: column;
  padding: 9px 6px 0 4px;
`;
const WellName = styled.h3`
  margin: 0;
  padding: 0 8px;
  font-size: 12px;
  font-weight: ${(p) => (p.$bold ? 600 : 400)};
`;
const Well = styled.div`
  display: flex;
  align-items: center;
  height: 28px;
  margin: 5px 0 11px;
  padding: 0 8px;
  border: 1px dashed #777;
  background: ${(p) => (p.$dark ? "#000" : "transparent")};
  white-space: nowrap;
`;
const Option = styled.label`
  display: flex;
  align-items: center;
  justify-content: space-between;
  height: 27px;
  padding: 0 16px 0 8px;
`;
const Options = styled.div`
  padding-top: 3px;
`;
const Track = styled.span`
  display: flex;
  flex-direction: ${(p) => (p.$on ? "row-reverse" : "row")};
  align-items: center;
  justify-content: center;
  gap: 2px;
  width: 32px;
  height: 16px;
  border: 1px solid ${(p) => (p.$on ? "#2aac94" : "#b0b0b0")};
  border-radius: 8px;
  background: ${(p) => (p.$on ? "#2aac94" : "transparent")};
  color: ${(p) => (p.$on ? "#1c3a34" : "#b0b0b0")};
  font-size: 9px;

  input {
    appearance: none;
    width: 8px;
    height: 8px;
    border-radius: 50%;
    background: ${(p) => (p.$on ? "#252423" : "#b0b0b0")};
  }
`;
const DataSearch = styled.label`
  display: flex;
  align-items: center;
  gap: 6px;
  height: 24px;
  margin: 7px 4px 10px;
  padding: 0 11px;
  border: 1px solid #777;
  border-radius: 3px;
  background: #242424;
  font-size: 13px;

  input {
    flex: 1;
    min-width: 0;
    outline: none;
  }
  input::placeholder {
    color: #9a9a9a;
    opacity: 1;
  }
`;
const TableRow = styled.button`
  display: flex;
  align-items: center;
  gap: 5px;
  height: 24px;
  padding-left: 14px;
`;

const axis = <path d="M.5 0v17.500H18" />;
const bolt = <path d="M3 0h6L7 4h3L2 12l1-5H0z" fill="#f5a623" stroke="#ffdf9a" strokeWidth=".6" />;
const funnel = <path d="M9.500 9.500h8l-3 4v4h-2v-4z" fill="#141414" />;

const visuals = [
  ["Stacked bar chart", <>{axis}<path d="M.5 3.500h5v3h-5M.5 11.500h7v3h-7" /><path d="M5.500 2.500h6v4h-6z" className="b" /><path d="M7.500 10.500h8v4h-8z" className="g" /></>],
  ["Stacked column chart", <>{axis}<path d="M4.500 17v-5h3v5M11.500 17V8h4v9" /><path d="M4.500 5.500h3v6h-3z" className="b" /><path d="M11.500 2.500h4v6h-4z" className="g" /></>],
  ["Clustered bar chart", <><path d="M.5 1.500h16v4H.5z" className="b" /><path d="M.5 6.500h6v3h-6zM.5 9.500h12v3H.5zM.5 13.500h8v3h-8z" className="q" />{axis}</>],
  ["Clustered column chart", <><path d="M1.500 1.500h4v16h-4z" className="b" /><path d="M5.500 7.500h3v10h-3zM10.500 10.500h3v7h-3zM14.500 5.500h3v12h-3z" className="g" />{axis}</>],
  ["100% stacked bar chart", <>{axis}<path d="M.5 3.500h5v3h-5M.5 11.500h9v3h-9" /><path d="M5.500 2.500h10v4h-10z" className="b" /><path d="M9.500 10.500h6v4h-6z" className="g" /></>],
  ["100% stacked column chart", <>{axis}<path d="M4.500 14v3M7.500 14v3M11.500 8v9M15.500 8v9" /><path d="M4.500 2.500h3v12h-3z" className="b" /><path d="M11.500 2.500h4v5h-4z" className="g" /></>],
  ["Line chart", <>{axis}<path d="M1 15l5-6 3 3 5-8 4 3" className="l" /><path d="M1 9l5-5 5 6 3-3 4-4" /></>],
  ["Area chart", <><path d="M9 11l4-10 5 8v9h-4z" className="g" /><path d="M.5 17V10l6-8 7 9" /><path d="M1 17l6-6 5 3 4-4 2 7z" className="b" /></>],
  ["Stacked area chart", <><path d="M.5 3l5 5 5-5 3 3 4-3v9l-4 3-4-4-4 4-5-5z" className="b" />{axis}</>],
  ["100% stacked area chart", <><path d="M.5 3.500h17v8l-3 2-3-3-4 4-3-3-4 3z" className="b" />{axis}</>],
  ["Line and stacked column chart", <>{axis}<path d="M4.500 17v-5h4v5M12.500 17V8h4v9" /><path d="M4.500 2.500h4v10h-4z" className="b" /><path d="M12.500 2.500h4v5h-4z" className="g" /><path d="M1 14l5-4 6 4 5-6" /></>],
  ["Line and clustered column chart", <>{axis}<path d="M3.500 8.500h4v9h-4z" className="b" /><path d="M7.500 1.500h4v16h-4z" fill="#141414" /><path d="M12.500 5.500h4v12h-4z" className="g" /><path d="M1 14l5-4 6 4 5-6" /></>],
  ["Ribbon chart", <><path d="M1 2c5 0 5 4 8 4s3-4 8-4v10c-5 0-4 3-8 3s-3-3-8-3z" className="g" /><path d="M1 7c4 0 5 6 8 6s4-6 8-6" className="l" strokeWidth="2" /><path d="M1 15c5-4 4 0 8 0s4-4 8 0" stroke="#f0a040" strokeWidth="2" />{axis}</>],
  ["Waterfall chart", <>{axis}<path d="M2.500 5.500h3v12h-3zM6.500 5.500v12M6.500 9.500h4M12.500 1.500h4v16h-4z" /><path d="M9.500 1.500h3v8h-3z" className="b" /></>],
  ["Funnel", <path d="M.5 1.500h17v5H.5zM3.500 6.500h11v5h-11zM6.500 11.500h5v5h-5z" className="b" />],
  ["Scatter chart", <>{axis}<path d="M4 5h3v3H4zM9 8h3v3H9zM14 11h3v3h-3z" fill="#1b78cc" stroke="none" /><path d="M14 1h3v3h-3zM4 13h3v3H4z" className="f" /></>],
  ["Pie chart", <><circle cx="9" cy="9" r="8.300" /><path d="M9 .7a8.300 8.300 0 0 1 5 15L9 9z" className="b" /></>],
  ["Donut chart", <><path d="M9 .7a8.300 8.300 0 1 1-8.300 8.300h4A4.300 4.300 0 1 0 9 4.700z" className="b" /><path d="M9 .7A8.300 8.300 0 0 0 .7 9h4A4.300 4.300 0 0 1 9 4.700z" /></>],
  ["Treemap", <><path d="M.5.5h8v9h-8zM.5 9.500h8v8h-8z" className="b" /><path d="M8.500.5h9v5h-9zM8.500 5.500h5v12h-5zM13.500 5.500h4v6h-4zM8.500 11.500h9v6h-9z" /></>],
  ["Map", <><circle cx="9" cy="7.500" r="5" fill="#2c2c2c" /><path d="M7 5l3-1 1 3-3 2zM9 9l3-1-2 3z" fill="#35a857" stroke="#35a857" /><path d="M13 1c5 5 2 13-5 13-2 0-4-1-5-2M9 14v3M4 17.500h10" /></>],
  ["Filled map", <><path d="M1 1l6 1 2 2 4-2h5v8l-4 5-6 2-5-3-3-6z" className="g" /><path d="M1 1l6 1 1 7H3zM9 9l6-2 1 7-6 2z" className="b" /></>],
  ["Azure map", <path d="M11.500 0L17 17l-6-4-8 4z" fill="#3c92dc" stroke="#62b0ee" />],
  ["Gauge", <><path d="M.5 13C.5 1 17.500 1 17.500 13h-4c0-6-9-6-9 0z" /><path d="M.5 13C.5 7 5 4 9 4v4c-3 0-4.500 2-4.500 5z" className="b" /><path d="M8 12l4-6" strokeWidth="2" /></>],
  ["Card", <><path d="M.5 2.500h17v12H.5z" /><text x="2" y="12" fontSize="8" fill="#62b0ee">123</text></>],
  ["Multi-row card", <><path d="M.5.5h17v16H.5zM3.500 3v11" /><path d="M5 5.500h10M5 11.500h10" className="l" strokeWidth="1.500" /><path d="M5 8.500h5M5 14.500h5" className="q" /></>],
  ["KPI", <><path d="M.5 1.500h17v14H.5z" /><path d="M5.500 4l3 5h-6z" fill="#3cba62" stroke="none" /><path d="M9.500 4h6l-3 5z" fill="#e0474c" stroke="none" /><path d="M3 12.500h8" className="q" /></>],
  ["Slicer", <><path d="M.5.5h17v3H.5z" className="g" /><path d="M.5 3v13.500H9M17.500 3v5M3.500 6.500h2v2h-2zM3.500 11.500h2v2h-2z" />{funnel}</>],
  ["Table", <><path d="M.5.5h17v3H.5z" className="g" /><path d="M.5.5h17v16H.5zM.5 7.500h17M.5 12h17M6.500 3v13M12.500 3v13" /></>],
  ["Matrix", <><path d="M6.500 7.500h11v9h-11z" className="b" /><path d="M.5.5h17v3H.5z" className="g" /><path d="M.5.5h17v16H.5zM.5 7.500h17M.5 12h17M6.500 3v13M12.500 3v13" /></>],
  ["R script visual", <text x="4" y="14" fontSize="15" fill="#2f9ce8">R</text>],
  ["Python visual", <text x="0" y="13" fontSize="15" fill="#2f9ce8">Py</text>],
  ["Key influencers", <>{axis}<path d="M1 3.500h12" className="l" /><circle cx="14.500" cy="3.500" r="2" className="b" /><path d="M1 8.500h8M1 12.500h4" className="q" /><circle cx="11" cy="8.500" r="1.500" className="g" /><circle cx="7" cy="12.500" r="1.500" className="g" /></>],
  ["Decomposition tree", <><path d="M6 8.500h6M8.500 2.500v12M8.500 2.500h4M8.500 14.500h4" /><path d="M.5 6.500h5v4h-5zM11.500.5h6v4h-6zM11.500 6.500h6v4h-6zM11.500 12.500h6v4h-6z" className="b" /></>],
  ["Q&A", <path d="M.5 1.500h17v11H7l-3 4v-4H.5z" className="l" />],
  ["Narrative", <><path d="M3.500 4V.500h8l4 4v13h-12V10M11.500.500v4h4M8 8.500h6M6 11.500h8M6 14.500h4" /><circle cx="3" cy="6.500" r="1.800" fill="#2f9ce8" stroke="none" /></>],
  ["Goals", <><path d="M4.500.500h9v6c0 6-9 6-9 0zM4.500 2.500h-4c0 5 2 6 5 6M13.500 2.500h4c0 5-2 6-5 6M9 11v3" /><path d="M5 17c0-4 8-4 8 0z" className="l" /></>],
  ["Paginated report", <><path d="M2.500.500h9l4 4v13h-13zM11.500.500v4h4" /><path d="M5 11h2v4H5zM8 12h2v3H8zM11 9h2v6h-2z" className="f" /></>],
  ["Card (new)", <><path d="M.5 3.500h17v12H.5z" /><text x="4" y="13" fontSize="8" fill="#62b0ee">123</text>{bolt}</>],
  ["Slicer (new)", <><path d="M6 1.500h11.500V8M1.500 8v8.500H9M6 4.500h11M4.500 11.500h2v2h-2z" />{funnel}{bolt}</>],
  ["ArcGIS maps", <><path d="M4 .5h13v9c-4-1-4 3-7 2s-4 5-9 5v-5z" className="b" /><path d="M9 1c0 5 5 4 5 9M3 14c6-4 6 0 8 2" stroke="#141414" strokeWidth="2" /><path d="M3 10C-2 5 0 0 3 0s5 5 0 10z" fill="#e08a00" stroke="none" /><circle cx="3" cy="3.500" r="1.200" fill="#141414" stroke="none" /><circle cx="16" cy="11" r="2" fill="#e08a00" stroke="none" /><circle cx="15" cy="16" r="2" fill="#e08a00" stroke="none" /></>],
  ["Power Apps", <g stroke="#8a3f94"><path d="M7 2l2-1 2 1 6 6v2l-6 6-2 1-2-1-6-6V8z" /><path d="M9 4l3 2-3 3-3-3zM9 9l4 4-4 4M9 9l-4 4M13 6l3 3-4 4M5 6L2 9l4 4" /></g>],
  ["Power Automate", <g stroke="#1f72d0"><path d="M.5 2.500h5L12 9l-6.500 6.500h-5M10 2.500h2L17.500 9 12 15.500h-2M.5 2.500L4 6M8.500 2.500h4M2 13l6-8" /></g>],
];

function Expand({ back }) {
  return (
    <Icon w={9}>
      <path d={back ? "M4 1L1 4.500 4 8M7.500 1l-3 3.500 3 3.500" : "M1 1l3 3.500L1 8M4.500 1l3 3.500-3 3.500"} strokeWidth="1.800" />
    </Icon>
  );
}

function Toggle({ label, initial }) {
  const [on, setOn] = useState(initial);
  return (
    <Option>
      {label}
      <Track $on={on}>
        <input type="checkbox" checked={on} onChange={() => setOn(!on)} />
        {on ? "On" : "Off"}
      </Track>
    </Option>
  );
}

function Visualizations() {
  return (
    <Pane>
      <PaneHead>
        <PaneTitle>Visualizations</PaneTitle>
        <Expand />
      </PaneHead>
      <BuildLabel>Build visual</BuildLabel>
      <ModeRow>
        <ModeButton $active aria-label="Build visual">
          <Icon w={26}>
            <path d="M2 1.500h19" />
            <path d="M1.500 7h23v6h-23zM1.500 18h23v6h-23z" fill="#2aac94" strokeDasharray="2 1" />
          </Icon>
        </ModeButton>
        <ModeButton aria-label="Format visual">
          <Icon w={26}>
            <path d="M9 24.500H2.500v-23h10l6 6v3M12.500 1.500v6h6" />
            <path d="M12.500 1.500v6h6z" className="f" />
            <path d="M25 10L15 20M22 9l-9 10c-4 0-2 5-5 5 4 2 7 0 7-3l10-11z" />
          </Icon>
        </ModeButton>
        <Notch width="17" height="9">
          <path d="M0 8.500L8.500.500l8 8" fill="#141414" stroke="#666" />
        </Notch>
      </ModeRow>
      <VisualGrid>
        {visuals.map(([name, drawing]) => (
          <VisualButton key={name} aria-label={name}>
            <Icon w={18}>{drawing}</Icon>
          </VisualButton>
        ))}
        <VisualButton aria-label="More visuals">
          <Icon w={18}>
            <path d="M4 7h2v2H4zM8 7h2v2H8zM12 7h2v2h-2z" className="f" />
          </Icon>
        </VisualButton>
      </VisualGrid>
      <Wells>
        <WellName>Values</WellName>
        <Well>Add data fields here</Well>
        <WellName $bold>Drill through</WellName>
        <Options>
          <Toggle label="Cross-report" initial={false} />
          <Toggle label="Keep all filters" initial />
        </Options>
        <Well $dark>Add drill-through fields here</Well>
      </Wells>
    </Pane>
  );
}

const gridArt = <path d="M1.500 3q0-1.500 1.500-1.500h7q1.500 0 1.500 1.500v7q0 1.500-1.500 1.500H3q-1.500 0-1.500-1.500zM1.500 5h10M1.500 8.500h10M5 1.500v10M8.500 1.500v10" />;
const measureArt = <path d="M1.500 1.500h8v10h-8zM3.500 3.500h4v2h-4zM3 7.500h1M5 7.500h1M7 7.500h1M3 9.500h1M5 9.500h1M7 9.500h1M11.500 3v10.500H4" />;

function DataPane() {
  return (
    <Pane>
      <PaneHead>
        <PaneTitle>Data</PaneTitle>
        <Expand />
      </PaneHead>
      <DataSearch>
        <Icon w={16}>
          <path d="M10.500 10.500l4 4M1.500 6.500a5 5 0 1 0 10 0a5 5 0 1 0-10 0" />
        </Icon>
        <input placeholder="Search" aria-label="Search fields" />
      </DataSearch>
      {["ALL MEASURES", "Employee", "Employee (1)"].map((name) => (
        <TableRow key={name}>
          <Icon w={9}>
            <path d="M3 1l4 3.500L3 8" strokeWidth="1.500" />
          </Icon>
          <Icon w={14}>{name === "ALL MEASURES" ? measureArt : gridArt}</Icon>
          {name}
        </TableRow>
      ))}
    </Pane>
  );
}

/* ---------- status bar ---------- */

const Status = styled.footer`
  display: flex;
  align-items: center;
  height: 24px;
  padding: 2px 12px 0 4px;
  border-bottom: 1px solid #000;
`;
const ZoomTools = styled.div`
  display: flex;
  align-items: center;
  margin-left: auto;
  gap: 4px;
`;
const ZoomSlider = styled.input`
  appearance: none;
  width: 100px;
  height: 16px;
  background:
    linear-gradient(#d4d4d4, #d4d4d4) 50px 50% / 1px 5px no-repeat,
    linear-gradient(#d4d4d4, #d4d4d4) 0 50% / 100% 1px no-repeat;

  &::-webkit-slider-thumb {
    appearance: none;
    width: 4px;
    height: 11px;
    background: #d4d4d4;
  }
`;
const ZoomValue = styled.span`
  margin: 0 16px 0 5px;
`;
const UpdateButton = styled.button`
  margin-left: 10px;
  font-size: 11px;
`;

/* ---------- taskbar ---------- */

const Taskbar = styled.footer`
  display: grid;
  grid-template-columns: 1fr auto 1fr;
  height: 48px;
  color: #1c1c1c;
  background: linear-gradient(90deg, #e6d8d8, #e3d7d9 18%, #ebdad0 32%, #e9dad2 65%, #e4dbdb 85%, #dedada);
`;
const Apps = styled.div`
  display: flex;
  grid-column: 2;
`;
const AppButton = styled.button`
  display: flex;
  align-items: center;
  justify-content: center;
  width: 44px;
  position: relative;

  &::before {
    content: "";
    position: absolute;
    inset: 5px 3px 5px 4px;
    border-radius: 4px;
    background: ${(p) => (p.$active ? "#f6eeea" : "transparent")};
  }
  &::after {
    content: "";
    position: absolute;
    bottom: 5px;
    width: ${(p) => (p.$active ? 16 : 6)}px;
    height: 3px;
    border-radius: 2px;
    background: ${(p) => (p.$active ? "#0b88c4" : p.$open ? "#888" : "transparent")};
  }
  svg {
    position: relative;
    stroke: none;
  }
`;
const Badge = styled.span`
  position: absolute;
  top: 7px;
  right: 5px;
  width: 16px;
  height: 16px;
  border-radius: 50%;
  background: #1587b8;
  color: #fff;
  font-family: "DejaVu Sans", sans-serif;
  font-size: 9px;
`;
const Tray = styled.div`
  display: flex;
  align-items: center;
  justify-content: flex-end;
  gap: 8px;
  padding-right: 20px;
  font-size: 11px;

  svg {
    stroke: #222;
  }
`;
const Clock = styled.div`
  margin-left: 4px;
  padding-top: 1px;
  text-align: right;
  font-family: "DejaVu Sans", sans-serif;
  font-size: 11px;
  line-height: 15px;
`;
const ClockTime = styled.div`
  direction: rtl;
  text-align: left;
  padding-left: 22px;
`;
const Language = styled.button`
  margin: 0 12px 0 4px;
`;

const apps = [
  ["Start", <><path d="M0 0h11.500v11.500H0zM12.500 0H24v11.500H12.500z" fill="#35b1f0" /><path d="M0 12.500h11.500V24H0zM12.500 12.500H24V24H12.500z" fill="#0c7cd5" /></>],
  ["Search", <g stroke="#262626" strokeWidth="2"><circle cx="10" cy="10" r="8.500" fill="#ece4de" /><path d="M16 16l7 7" strokeWidth="3" /></g>],
  ["Repair tool", <><circle cx="12" cy="12" r="12" fill="#fff" /><circle cx="12" cy="12" r="11" fill="#1279d8" /><path d="M8 16l8-7" stroke="#fff" strokeWidth="3" /><path d="M5 15.500a2.500 2.500 0 1 0 3-2M19 8.500a3 3 0 1 1-3-3" stroke="#fff" strokeWidth="2" /></>],
  ["Telegram", <><circle cx="12" cy="12" r="11" fill="#2a9fd8" /><path d="M5 12l13-6-2 12-5-3-2 2v-4l6-5-7 4z" fill="#fff" /></>],
  ["WhatsApp", <><path d="M1 23l2-6a10 10 0 1 1 4 4z" fill="#e6f0e6" stroke="#128a4d" strokeWidth="2.500" /><path d="M8 7l2 3-1 1c1 3 2 4 4 4l2-1 3 2c-1 3-3 3-5 2-4-1-7-4-7-8z" fill="#128a4d" /></>],
  ["Udemy", <><rect x="1" width="22" height="24" rx="8" fill="#fff" /><path d="M8 6l4-3 4 3v3l-4-3-4 3z" fill="#a435f0" /><path d="M8 10v5c0 5 8 5 8 0v-5" stroke="#222" strokeWidth="3" /></>],
  ["File Explorer", <><path d="M0 3q0-1 1-1h8l3 3h11q1 0 1 1v15H0z" fill="#f3b32c" /><path d="M0 8h24v14H0z" fill="#fccc49" /><path d="M6 17h12v5H6z" fill="#1f7cd0" /></>],
  ["Azure Data", <><rect x="1" width="22" height="24" rx="4" fill="#fff" /><path d="M9 3h5l6 18h-6L9 9z" fill="#2f9ae8" /><path d="M9 3L4 21h5l4-13z" fill="#1461b8" /></>],
  ["Outlook", <><path d="M8 1h12v12H8z" fill="#1490df" /><path d="M6 9l9 5 9-5v13H6z" fill="#28a8ea" /><path d="M0 6h13v13H0z" fill="#0f5fb5" /><circle cx="6.500" cy="12.500" r="3" stroke="#fff" strokeWidth="1.800" /></>],
  ["Teams", <><circle cx="20" cy="6" r="3" fill="#5059c9" /><circle cx="13" cy="5" r="4" fill="#7b83eb" /><path d="M8 9h16v7c0 6-5 6-6 4-2 4-10 4-10-3z" fill="#6770d8" /><path d="M0 6h13v13H0z" fill="#4650b8" /><path d="M3 9.500h7M6.500 9.500V16" stroke="#fff" strokeWidth="1.800" /></>],
  ["SQL tools", <><path d="M1 18v5h5M17 1h6v5" stroke="#3c9c58" strokeWidth="2" /><path d="M4 4c0-3 12-3 12 0v9c0 3-12 3-12 0z" fill="#f2bb36" /><path d="M13 12l9 9M22 13l-9 9" stroke="#b45bd8" strokeWidth="2" /></>],
  ["Penguin", <><rect x="3" width="18" height="24" rx="6" fill="#1487d4" /><path d="M6 22V9c0-7 12-7 12 0v13z" fill="#222" /><circle cx="9" cy="10" r="3.500" fill="#fff" /><circle cx="15" cy="10" r="3.500" fill="#fff" /><circle cx="9.500" cy="10" r="1.200" fill="#111" /><circle cx="14.500" cy="10" r="1.200" fill="#111" /><path d="M9 14h6l-3 4z" fill="#f2a52c" /><path d="M8 18h8v4H8z" fill="#eee" /></>],
  ["Copilot", null],
  ["Chrome", <><circle cx="12" cy="12" r="12" fill="#f2bd24" /><path d="M1.600 6a12 12 0 0 1 20.800 0H12a6 6 0 0 0-5 9z" fill="#df4434" /><path d="M1.600 6l5.200 9a6 6 0 0 0 5.200 3l-2 6A12 12 0 0 1 1.600 6z" fill="#2f9e4f" /><circle cx="12" cy="12" r="5.800" fill="#fff" /><circle cx="12" cy="12" r="4.500" fill="#3979e8" /><circle cx="20" cy="2" r="7" fill="#d8f0fa" /><circle cx="20" cy="0" r="2.500" fill="#1779c4" /><path d="M15.500 7c0-5 9-5 9 0z" fill="#1779c4" /></>],
  ["Power BI", <><path d="M12 0h7q1 0 1 1v22q0 1-1 1h-7z" fill="#e0a315" /><path d="M7 7h7q1 0 1 1v16H8q-1 0-1-1z" fill="#efc03b" /><path d="M2 13h6q1 0 1 1v10H3q-1 0-1-1z" fill="#f5d260" /></>],
];

const Watermark = styled.div`
  position: absolute;
  right: 598px;
  bottom: 14px;
  width: 170px;
  text-align: center;
  color: rgba(150, 150, 150, 0.55);
  font-family: "DejaVu Sans", sans-serif;
  font-weight: 700;
  pointer-events: none;
`;
const WatermarkName = styled.div`
  font-size: 48px;
  line-height: 60px;
`;
const WatermarkSite = styled.div`
  font-family: "Liberation Sans", sans-serif;
  font-size: 26px;
  line-height: 24px;
  opacity: 0.3;
`;

export default function App() {
  return (
    <Window>
      <GlobalStyle />
      <Title />
      <Menu />
      <Ribbon />
      <Workspace>
        <Rail>
          <RailButton $active aria-label="Report view">
            <Icon w={16}>
              <path d="M1.500 1v13.500H15M4.500 4.500h2v8h-2zM8.500 7.500h2v5h-2zM12.500 2.500h2v10h-2z" />
            </Icon>
          </RailButton>
          <RailButton aria-label="Table view">
            <Icon w={17}>
              <path d="M.5 1.500h16v14H.5zM.5 4.500h16M.5 8.500h16M.5 12.500h16M5.500 4v11M11.500 4v11" />
            </Icon>
          </RailButton>
          <RailButton aria-label="Model view">
            <Icon w={19}>
              <path d="M.5 6.500h7v7h-7zM.5 9.500h7M11.500.500h7v7h-7zM11.500 3.500h7M11.500 11.500h7v7h-7zM11.500 14.500h7M4.500 6V3.500h7M4.500 14v2.500h7" />
            </Icon>
          </RailButton>
          <RailButton aria-label="DAX query view">
            <Icon w={18}>
              <path d="M4.500 9V1.500h6l4 4V13M10.500 1.500v4h4M17 7v7l-2 2" />
              <text x="0" y="16" fontSize="7" fill="#d4d4d4">DAX</text>
            </Icon>
          </RailButton>
        </Rail>
        <Center>
          <CanvasRow>
            <Canvas>
              <ReportPage />
            </Canvas>
            <FilterStrip>
              <Expand back />
              <FilterMark>
                <Icon w={10}>
                  <path d="M8.500 1v9M5.500 2.500v6M2.500 4v3" />
                </Icon>
                <FilterLabel>Filters</FilterLabel>
              </FilterMark>
            </FilterStrip>
          </CanvasRow>
          <PageTabs>
            <Device $active aria-label="Desktop layout">
              <Icon w={17}>
                <path d="M1.500 1.500h14v11h-14zM6 13v2M11 13v2M4 15.500h9" strokeWidth="1.300" />
              </Icon>
            </Device>
            <Phone aria-label="Mobile layout">
              <Icon w={11} h={18}>
                <path d="M1 1h9v16H1zM4 14.500h3" strokeWidth="1.500" />
              </Icon>
            </Phone>
            <PageArrow aria-label="Previous page">
              <Icon w={8}>
                <path d="M5.500.500v7l-4-3.500z" />
              </Icon>
            </PageArrow>
            <PageArrow aria-label="Next page">
              <Icon w={8}>
                <path d="M1.500.500v7l4-3.500z" />
              </Icon>
            </PageArrow>
            <Tab $active>HOME</Tab>
            <Tab>ACTION</Tab>
            <Tab>DETAILS</Tab>
            <AddTab aria-label="New page">
              <Icon w={12}>
                <path d="M6 1v10M1 6h10" stroke="#1c2422" strokeWidth="2.500" />
              </Icon>
            </AddTab>
          </PageTabs>
        </Center>
        <Visualizations />
        <DataPane />
      </Workspace>
      <Status>
        Page 1 of 3
        <ZoomTools>
          <span>-</span>
          <ZoomSlider type="range" min="0" max="100" defaultValue="32" aria-label="Zoom" />
          <Icon w={15}>
            <path d="M7.500 4v8M3.500 8h8" />
          </Icon>
          <ZoomValue>67%</ZoomValue>
          <Icon w={15} h={12}>
            <path d="M1.500 1.500h12v9h-12zM6 3.500H4.500v5H6M9 3.500h1.500v5H9" />
          </Icon>
          <UpdateButton>Update available (click to download)</UpdateButton>
        </ZoomTools>
      </Status>
      <Taskbar>
        <Apps>
          {apps.map(([name, drawing]) => (
            <AppButton key={name} aria-label={name} $active={name === "Power BI"} $open={name === "Chrome"}>
              {drawing ? (
                <Svg width="24" height="24" viewBox="0 0 24 24">{drawing}</Svg>
              ) : (
                <CopilotMark size={24} />
              )}
              {name === "WhatsApp" && <Badge>١٥</Badge>}
            </AppButton>
          ))}
        </Apps>
        <Tray>
          <Icon w={12}>
            <path d="M1 9l5-5 5 5" strokeWidth="1.300" />
          </Icon>
          <Icon w={32} h={14}>
            <path d="M11 12C6 12 7 6 11 6c1-6 9-5 9 0 5 1 4 6 0 6z" fill="#bcbcbc" />
          </Icon>
          <Language>ENG</Language>
          <Icon w={14}>
            <path d="M1 6c4-4 8-4 12 0M3 8c3-2.500 5-2.500 8 0M5 10c1.500-1 2.500-1 4 0M7 11v1.500" />
          </Icon>
          <Icon w={15}>
            <path d="M1 5h3l3-3v11L4 10H1zM9 5c1 1 1 4 0 5M11 3c2 2 2 7 0 9M13 2c3 3 3 8 0 11" />
          </Icon>
          <Icon w={18} h={14}>
            <path d="M3.500 3.500h11v8h-11zM15.500 6v3" strokeWidth="1.300" />
            <path d="M9 5h4v5H7zM4 0h3v3h2L6 7 2 4z" fill="#222" stroke="none" />
          </Icon>
          <Clock>
            <ClockTime>٠٢:١٤ م</ClockTime>
            <div>٢٠٢٥/٠٣/٠٣</div>
          </Clock>
          <Icon w={15}>
            <path d="M2 12h11V5c0-5-9-5-9 0zM6 13h4" fill="#222" />
            <path d="M7 5h3l-3 4h3" stroke="#eee" />
          </Icon>
        </Tray>
      </Taskbar>
      <Watermark>
        <WatermarkName dir="rtl">مستقل</WatermarkName>
        <WatermarkSite>mostaql.com</WatermarkSite>
      </Watermark>
    </Window>
  );
}
